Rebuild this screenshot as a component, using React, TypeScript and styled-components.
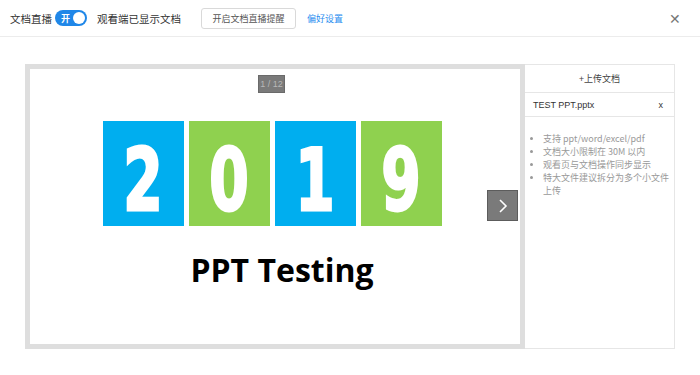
import React from "react";
import styled, { createGlobalStyle } from "styled-components";

const GlobalStyle = createGlobalStyle`
  html, body {
    margin: 0;
    padding: 0;
    background: #fff;
    font-family: "Noto Sans CJK SC", "Noto Sans", sans-serif;
  }
`;

const Header = styled.div`
  height: 37px;
  border-bottom: 1px solid #ececec;
  display: flex;
  align-items: center;
  padding: 0 10px;
  box-sizing: border-box;
`;

const Label = styled.span`
  font-size: 10.5px;
  color: #333;
`;

const Toggle = styled.div`
  width: 32px;
  height: 16px;
  border-radius: 8px;
  background: #1f87e8;
  margin-left: 3px;
  display: flex;
  align-items: center;
  justify-content: space-between;
  padding: 0 2px 0 6px;
  box-sizing: border-box;
  color: #fff;
  font-size: 9px;
  font-weight: bold;

  & .knob {
    width: 12px;
    height: 12px;
    border-radius: 50%;
    background: #fff;
  }
`;

const Status = styled(Label)`
  margin-left: 10px;
`;

const OutlineButton = styled.button`
  margin-left: 20px;
  height: 21px;
  width: 95px;
  border: 1px solid #d9d9d9;
  border-radius: 3px;
  background: #fff;
  color: #555;
  font-family: inherit;
  font-size: 9px;
  padding: 0;
`;

const Link = styled.a`
  margin-left: 11px;
  font-size: 9px;
  color: #2a8ef0;
`;

const Close = styled.div`
  margin-left: auto;
  margin-right: 9px;
  color: #777;
  font-size: 14px;
  line-height: 1;
`;

const Main = styled.div`
  display: flex;
  padding: 27px 0 0 25px;
`;

const Slide = styled.div`
  position: relative;
  width: 500px;
  height: 285px;
  border: 5px solid #dedede;
  background: #fff;
  display: flex;
  flex-direction: column;
  align-items: center;
  padding-top: 52px;
  box-sizing: border-box;
`;

const PageIndicator = styled.div`
  position: absolute;
  top: 6px;
  left: 228px;
  width: 25px;
  height: 16px;
  background: #7a7a7a;
  border: 1px solid #6a6a6a;
  color: #b8b8b8;
  font-family: "Liberation Sans", sans-serif;
  font-size: 9px;
  display: flex;
  align-items: center;
  justify-content: center;
`;

const Year = styled.div`
  display: flex;
  gap: 5px;
  margin-left: -6px;
`;

const Tile = styled.div<{ $color: string }>`
  width: 81px;
  height: 105px;
  padding-top: 12px;
  box-sizing: border-box;
  background: ${(p) => p.$color};
  display: flex;
  align-items: center;
  justify-content: center;
  color: #fff;
  font-family: "DejaVu Sans", sans-serif;
  font-weight: bold;
  font-size: 86px;
  line-height: 90px;

  & span {
    display: inline-block;
    transform: scaleX(0.66);
    -webkit-text-stroke: 3px #fff;
  }
`;

const Title = styled.div`
  margin-top: 24px;
  margin-left: 14px;
  font-family: "Open Sans", sans-serif;
  font-weight: bold;
  font-size: 32px;
  color: #000;
  line-height: 1.25;
`;

const NextButton = styled.div`
  position: absolute;
  top: 121px;
  left: 457px;
  width: 31px;
  height: 31px;
  background: #7a7a7a;
  border: 1px solid #5c5c5c;
  box-sizing: border-box;
  display: flex;
  align-items: center;
  justify-content: center;
`;

const Sidebar = styled.div`
  width: 150px;
  height: 285px;
  border: 1px solid #e6e6e6;
  border-left: none;
  box-sizing: border-box;
  display: flex;
  flex-direction: column;
`;

const UploadRow = styled.div`
  height: 27px;
  border-bottom: 1px solid #e6e6e6;
  display: flex;
  align-items: center;
  justify-content: center;
  font-size: 9px;
  color: #444;
`;

const FileRow = styled.div`
  height: 23px;
  border-bottom: 1px solid #e6e6e6;
  display: flex;
  align-items: center;
  justify-content: space-between;
  padding: 0 11px 0 8px;
  font-size: 9px;
  color: #333;
  font-family: "Liberation Sans", "Noto Sans CJK SC", sans-serif;
`;

const Tips = styled.ul`
  margin: 15px 0 0;
  padding: 0 0 0 18px;
  font-size: 9px;
  color: #999;
  line-height: 13px;

  & li::marker {
    font-size: 8px;
  }
`;

const tiles = [
  { d: "2", c: "#00aeef" },
  { d: "0", c: "#8fd14f" },
  { d: "1", c: "#00aeef" },
  { d: "9", c: "#8fd14f" },
];

export default function App() {
  return (
    <>
      <GlobalStyle />
      <Header>
        <Label>文档直播</Label>
        <Toggle>
          开<span className="knob" />
        </Toggle>
        <Status>观看端已显示文档</Status>
        <OutlineButton>开启文档直播提醒</OutlineButton>
        <Link>偏好设置</Link>
        <Close>✕</Close>
      </Header>
      <Main>
        <Slide>
          <PageIndicator>1 / 12</PageIndicator>
          <Year>
            {tiles.map((t, i) => (
              <Tile key={i} $color={t.c}>
                <span>{t.d}</span>
              </Tile>
            ))}
          </Year>
          <Title>PPT Testing</Title>
          <NextButton>
            <svg width="12" height="16" viewBox="0 0 12 16">
              <path d="M3 2 L9 8 L3 14" stroke="#fff" strokeWidth="1.6" fill="none" />
            </svg>
          </NextButton>
        </Slide>
        <Sidebar>
          <UploadRow>+上传文档</UploadRow>
          <FileRow>
            <span>TEST PPT.pptx</span>
            <span>x</span>
          </FileRow>
          <Tips>
            <li>支持 ppt/word/excel/pdf</li>
            <li>文档大小限制在 30M 以内</li>
            <li>观看页与文档操作同步显示</li>
            <li>特大文件建议拆分为多个小文件上传</li>
          </Tips>
        </Sidebar>
      </Main>
    </>
  );
}
